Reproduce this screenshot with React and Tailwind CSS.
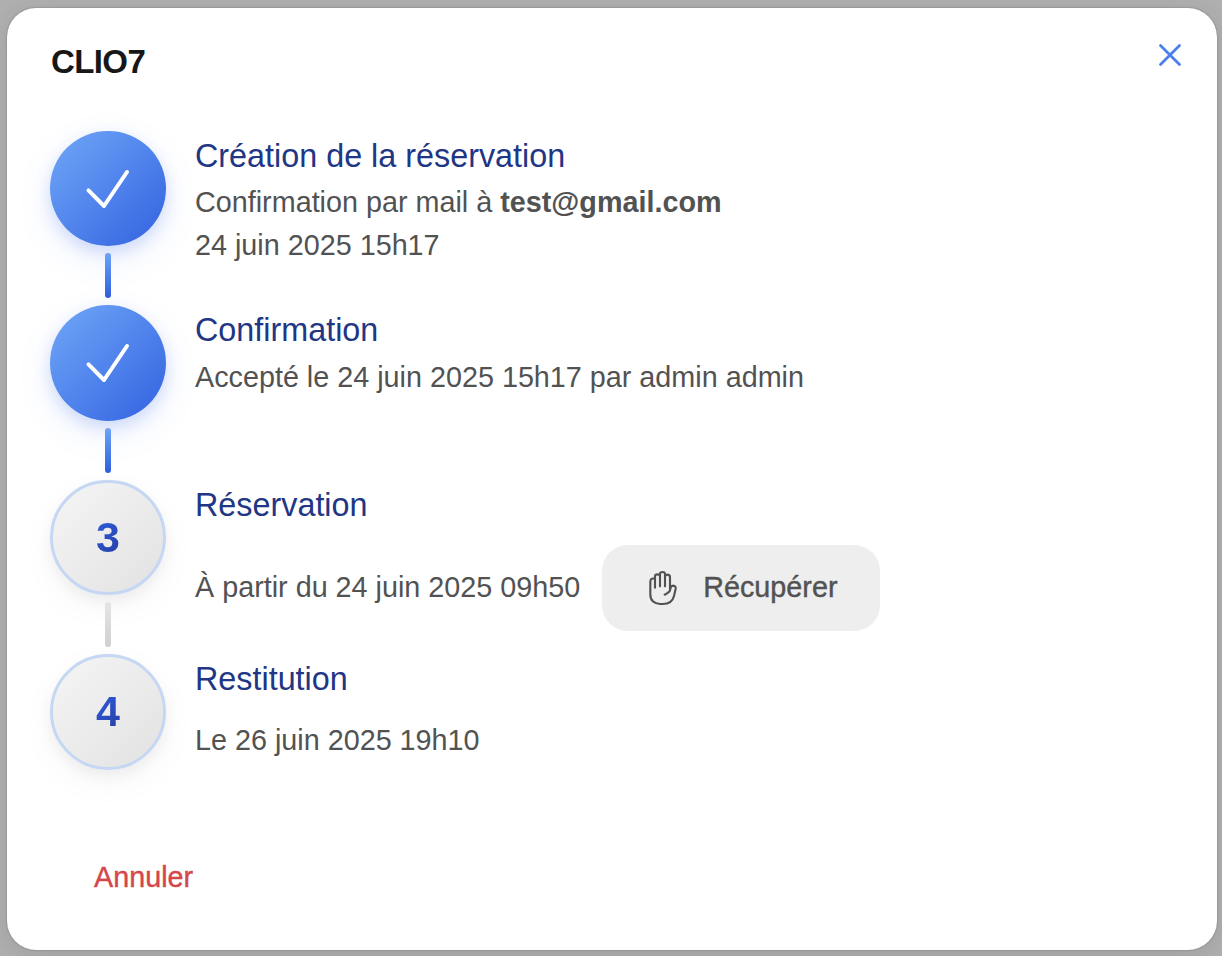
import React from "react";

const Check = () => (
  <svg className="h-[116px] w-[116px]" viewBox="0 0 116 116" fill="none" stroke="#fff" strokeWidth="4" strokeLinecap="round" strokeLinejoin="round">
    <path d="M38.5 59.3L54 75L77 41" />
  </svg>
);

const Hand = () => (
  <svg className="h-[36px] w-[29px] shrink-0" viewBox="54 45 87 108" fill="none" stroke="currentColor" strokeWidth="6.4" strokeLinecap="round" strokeLinejoin="round">
    <path d="M75 98V64Q75 58 82.5 58Q90 58 90 64V94" />
    <path d="M90 64V57Q90 51 97.5 51Q105 51 105 57V94" />
    <path d="M105 64Q106 59 112 59Q120 59 120 67V104" />
    <path d="M75 71Q61 68 61 80V119C61 137 74 147 90 147H99C115 147 128 139 132 123L137 101Q138 93 129 92Q124 92 122 98L119 109Q113 115 104 119" />
  </svg>
);

function Step({ done, number, last, title, children }) {
  return (
    <li className="flex h-[174.4px] gap-[29px]">
      <div className="flex w-[116px] shrink-0 flex-col items-center gap-[6.9px]">
        {done ? (
          <div className="h-[115.4px] w-[116px] shrink-0 rounded-full bg-linear-135 from-[#72a7f7] to-[#3460e0] shadow-[0_12px_36px_rgba(59,110,235,0.1),0_6px_16px_rgba(59,110,235,0.2)]">
            <Check />
          </div>
        ) : (
          <div className="flex h-[115.4px] w-[116px] shrink-0 items-center justify-center rounded-full border-3 border-[#c5d7f3] bg-linear-135 from-[#f5f5f5] to-[#e2e2e2] shadow-[0_12px_36px_rgba(0,0,0,0.04),0_6px_14px_rgba(0,0,0,0.05)]">
            <span className="mb-[1px] bg-linear-135 from-[#2f62e6] to-[#263b9c] bg-clip-text text-[43px] leading-[50px] font-bold text-transparent">
              {number}
            </span>
          </div>
        )}
        {!last && (
          <div className={done
            ? "h-[45px] w-[6px] rounded-full bg-linear-to-b from-[#6ea3f7] to-[#2f5ddf]"
            : "h-[45px] w-[6px] rounded-full bg-linear-to-b from-[#e5e5e5] to-[#d0d0d0]"} />
        )}
      </div>
      <div className="flex flex-col whitespace-nowrap text-[28.76px] text-[#525252]">
        <h3 className="mt-[4px] h-[46px] text-[32.35px] leading-[43px] text-[#213684]">{title}</h3>
        {children}
      </div>
    </li>
  );
}

export default function App() {
  return (
    <div className="h-[956px] w-[1222px] overflow-hidden bg-[#b0b0b0] pt-[8px] pl-[7px] font-['Liberation_Sans',Arial,sans-serif]">
      <section className="flex h-[942px] w-[1210px] flex-col rounded-[29px] bg-white shadow-[0_0_2px_rgba(0,0,0,0.35),0_6px_30px_rgba(0,0,0,0.1)]">
        <header className="flex h-[123px] justify-between pt-[32px] pr-[32px] pl-[44px]">
          <h2 className="text-[33px] leading-[43px] font-bold tracking-[-0.6px] text-[#171717]">CLIO7</h2>
          <button className="h-[30px] w-[30px]" aria-label="Fermer">
            <svg viewBox="0 0 30 30" fill="none" stroke="#4a80ee" strokeWidth="2.8" strokeLinecap="round">
              <path d="M5.5 5.5L24.5 24.5M24.5 5.5L5.5 24.5" />
            </svg>
          </button>
        </header>
        <ol className="flex flex-col pl-[43px]">
          <Step done title="Création de la réservation">
            <p className="leading-[43px]">Confirmation par mail à <b>test@gmail.com</b></p>
            <p className="leading-[42px]">24 juin 2025 15h17</p>
          </Step>
          <Step done title="Confirmation">
            <p className="mt-[1px] leading-[43.5px]">Accepté le 24 juin 2025 15h17 par admin admin</p>
          </Step>
          <Step number="3" title="Réservation">
            <div className="mt-[15px] flex items-center gap-[22px]">
              <p>À partir du 24 juin 2025 09h50</p>
              <button className="flex h-[86px] w-[278px] items-center rounded-[26px] bg-[#eeeeee] pl-[46px]">
                <Hand />
                <span className="ml-[26px] [-webkit-text-stroke:0.4px_#525252]">Récupérer</span>
              </button>
            </div>
          </Step>
          <Step number="4" last title="Restitution">
            <p className="mt-[15px] leading-[43.5px]">Le 26 juin 2025 19h10</p>
          </Step>
        </ol>
        <footer className="pt-[27.4px] pl-[87px]">
          <button className="text-[28.76px] leading-[43px] text-[#d4474b] [-webkit-text-stroke:0.4px_#d4474b]">Annuler</button>
        </footer>
      </section>
    </div>
  );
}
